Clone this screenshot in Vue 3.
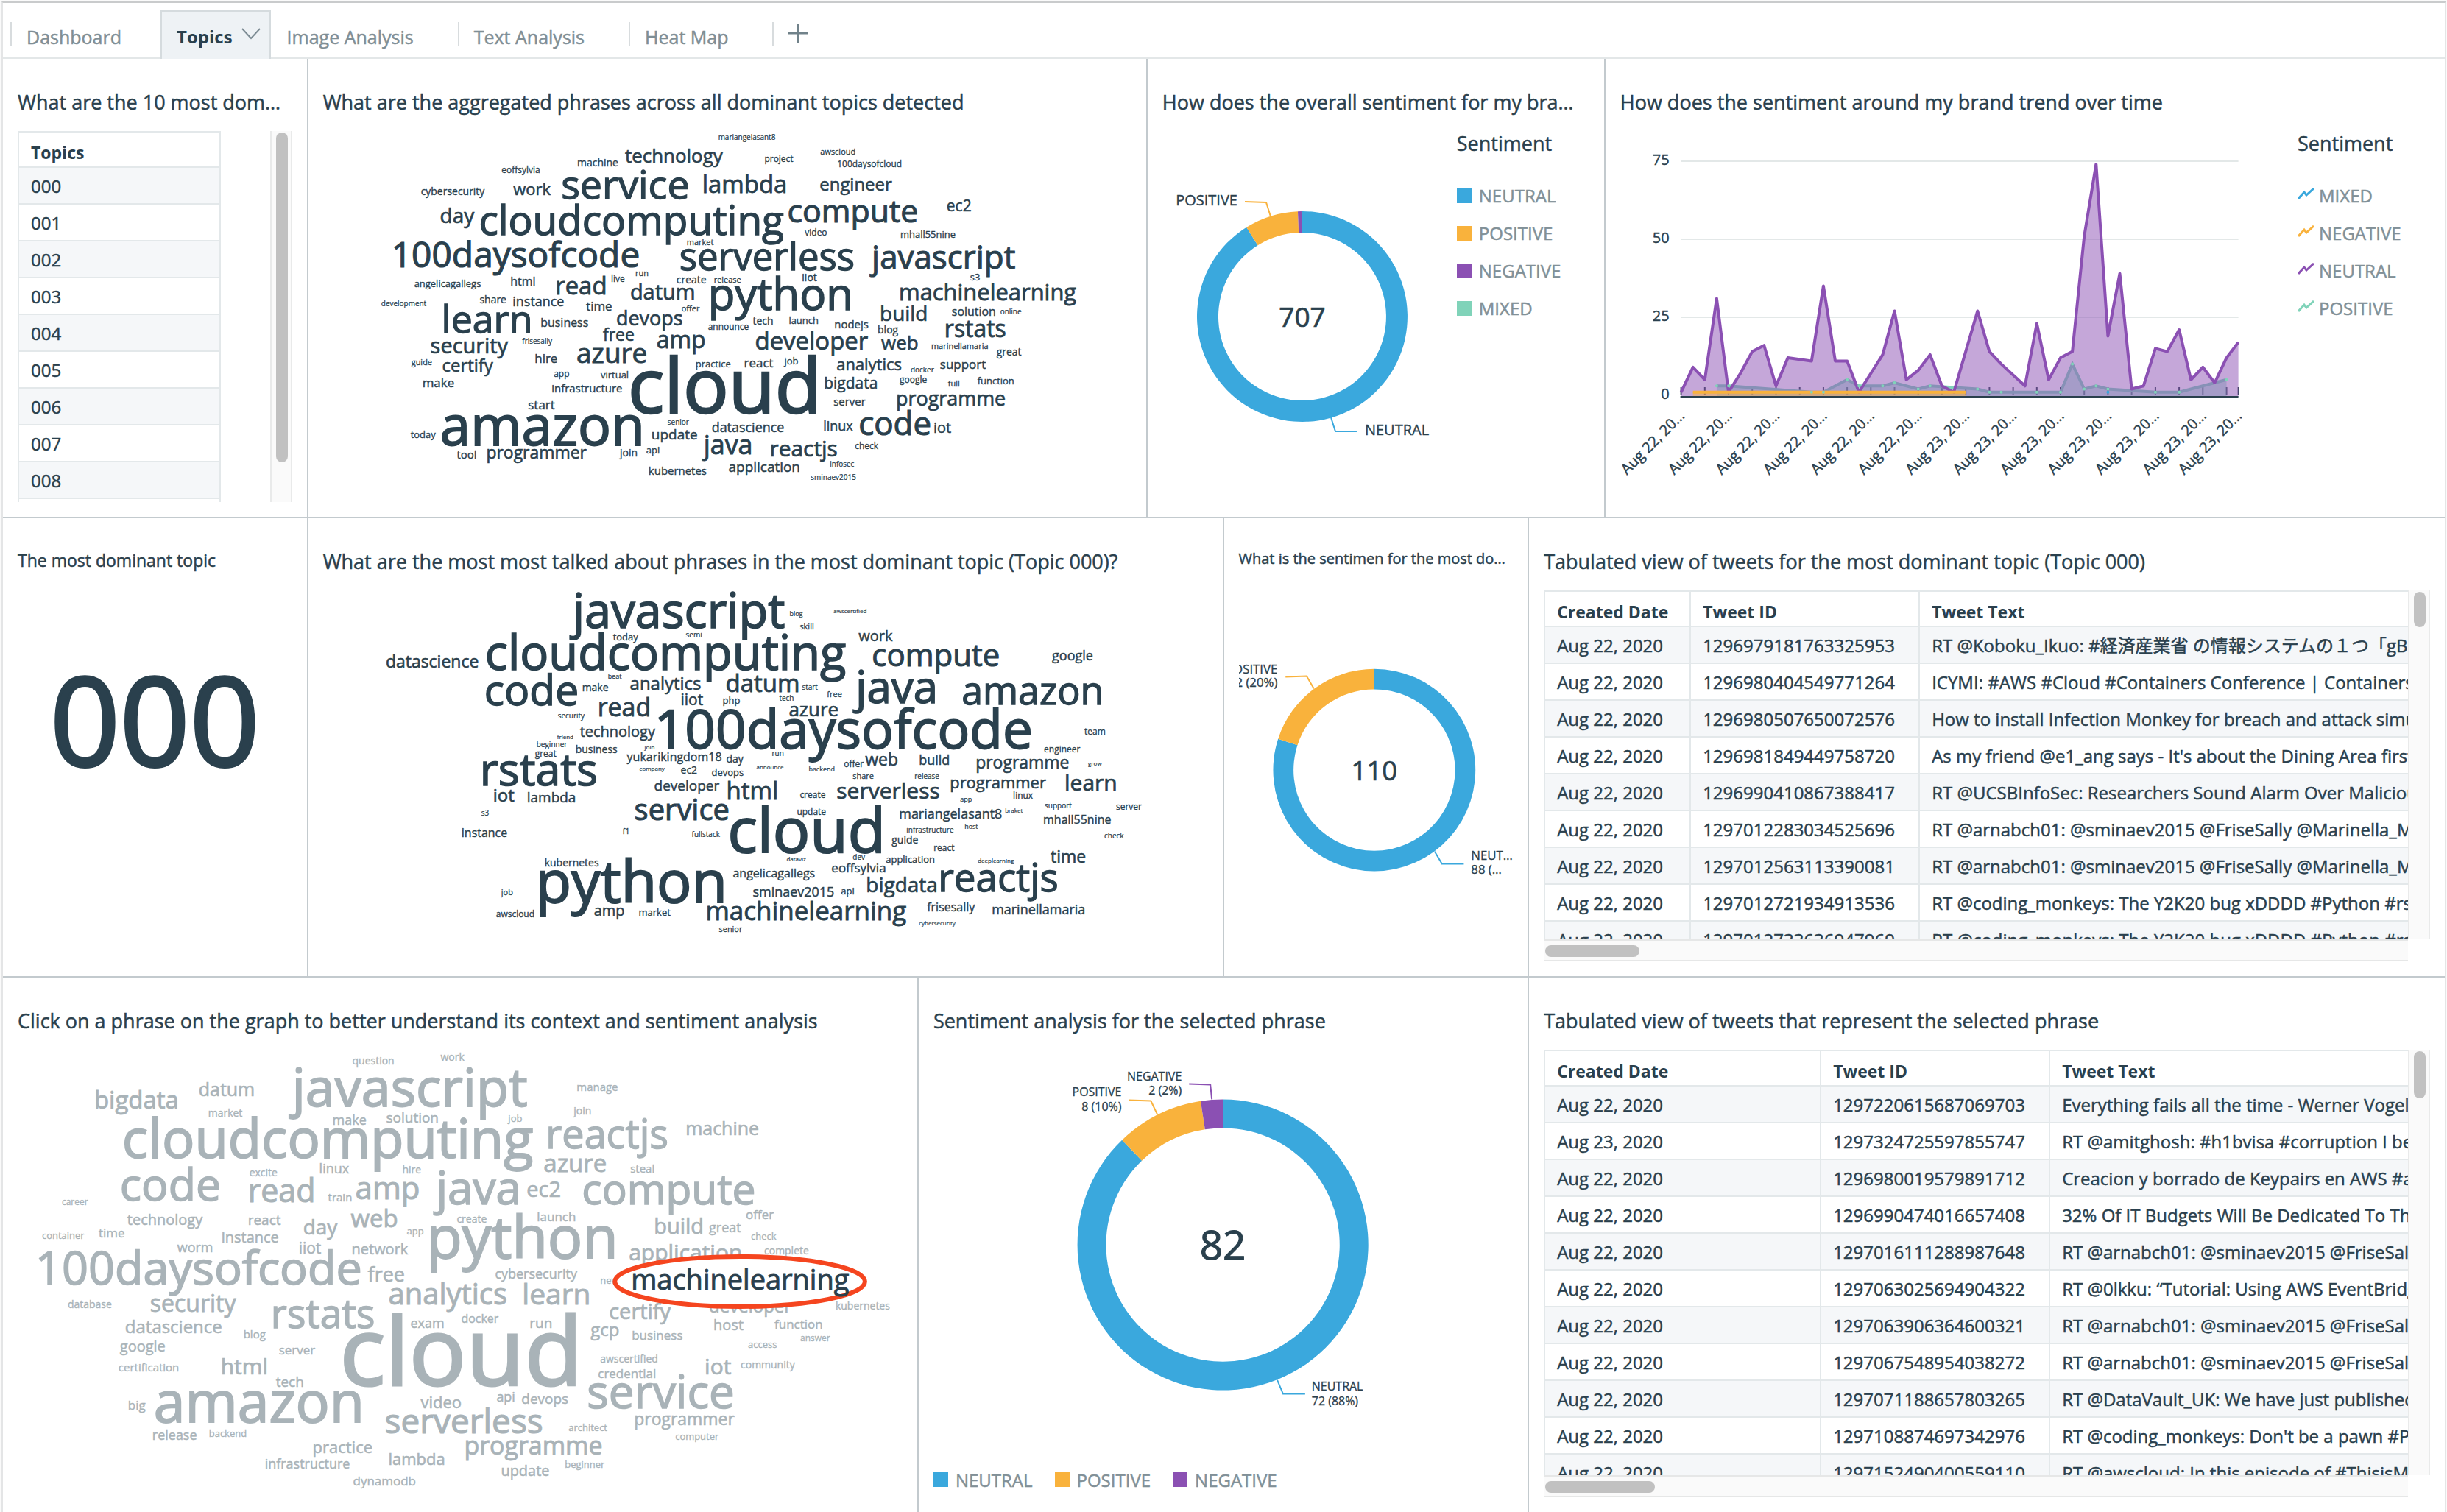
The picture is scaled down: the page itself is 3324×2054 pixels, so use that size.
<script setup>
const BLUE = '#3aa8dd'
const ORANGE = '#f9b23c'
const PURPLE = '#8b50b3'
const GREEN = '#80d3b9'

/* ---------- word clouds: [phrase, left, baseline, width] ---------- */
const pen = document.createElement('canvas').getContext('2d')
pen.font = '100px "Open Sans", "Noto Sans", sans-serif'

function layoutCloud(words) {
  return words.map(([text, left, y, width]) => {
    const m = pen.measureText(text)
    const ink = m.actualBoundingBoxLeft + m.actualBoundingBoxRight + 3
    const size = Math.round((width * 100) / ink)
    return { text, y, size, x: Math.round(left + ((m.actualBoundingBoxLeft + 1) * size) / 100) }
  })
}

const allTopics = layoutCloud([
  ['mariangelasant8', 477, 29, 80], ['technology', 349, 60, 134], ['machine', 285, 65, 56],
  ['eoffsylvia', 181, 75, 50], ['cybersecurity', 72, 105, 89], ['work', 197, 105, 51],
  ['service', 264, 110, 171], ['lambda', 456, 102, 112], ['day', 98, 143, 46],
  ['cloudcomputing', 152, 159, 410], ['100daysofcode', 35, 203, 331], ['market', 434, 173, 37],
  ['serverless', 425, 207, 238], ['run', 364, 215, 17], ['live', 331, 223, 17],
  ['create', 420, 225, 41], ['release', 471, 224, 37], ['angelicagallegs', 62, 230, 88],
  ['html', 194, 228, 33], ['read', 256, 240, 67], ['datum', 357, 247, 85],
  ['python', 466, 261, 190], ['development', 17, 256, 63], ['share', 152, 252, 36],
  ['instance', 197, 256, 67], ['time', 296, 262, 36], ['learn', 103, 292, 118],
  ['business', 235, 284, 64], ['devops', 338, 282, 88], ['offer', 426, 263, 25],
  ['announce', 462, 288, 56], ['free', 319, 303, 42], ['amp', 393, 313, 66],
  ['security', 85, 320, 104], ['frisesally', 209, 307, 42], ['azure', 284, 333, 94],
  ['hire', 227, 333, 29], ['guide', 58, 336, 29], ['certify', 101, 345, 68],
  ['practice', 446, 339, 48], ['app', 252, 352, 21], ['virtual', 316, 354, 37],
  ['make', 74, 366, 43], ['infrastructure', 250, 373, 98], ['cloud', 357, 401, 253],
  ['start', 218, 396, 36], ['senior', 407, 417, 29], ['amazon', 99, 445, 273],
  ['today', 57, 435, 35], ['tool', 120, 464, 27], ['programmer', 162, 464, 137],
  ['update', 386, 437, 60], ['datascience', 468, 427, 100], ['join', 341, 460, 25],
  ['api', 378, 456, 18], ['java', 453, 457, 67], ['kubernetes', 382, 486, 80],
  ['application', 491, 482, 95], ['react', 512, 339, 38], ['awscloud', 615, 49, 49],
  ['project', 540, 59, 37], ['100daysofcloud', 639, 66, 83], ['engineer', 615, 99, 97],
  ['compute', 572, 142, 175], ['ec2', 788, 127, 32], ['video', 594, 160, 29],
  ['mhall55nine', 725, 163, 72], ['javascript', 682, 205, 197], ['s3', 820, 221, 13],
  ['iiot', 591, 222, 20], ['machinelearning', 724, 248, 238], ['build', 698, 276, 62],
  ['solution', 795, 269, 58], ['online', 860, 267, 29], ['tech', 523, 281, 27],
  ['launch', 573, 280, 38], ['nodejs', 635, 286, 46], ['blog', 694, 293, 27],
  ['rstats', 786, 298, 81], ['developer', 527, 315, 152], ['web', 698, 315, 49],
  ['marinellamaria', 767, 314, 79], ['great', 855, 323, 33], ['job', 565, 335, 20],
  ['analytics', 638, 343, 88], ['docker', 738, 346, 32], ['support', 779, 341, 63],
  ['bigdata', 621, 368, 72], ['google', 723, 360, 36], ['full', 789, 365, 16],
  ['function', 829, 362, 48], ['server', 634, 391, 44], ['programme', 720, 391, 145],
  ['linux', 620, 425, 39], ['code', 669, 431, 95], ['iot', 770, 428, 23],
  ['check', 662, 450, 32], ['reactjs', 548, 460, 89], ['infosec', 629, 475, 34],
  ['sminaev2015', 602, 493, 64],
])

const dominantTopic = layoutCloud([
  ['javascript', 272, 73, 292], ['datascience', 24, 127, 126], ['cloudcomputing', 161, 130, 492],
  ['today', 332, 90, 34], ['semi', 431, 86, 22], ['code', 159, 178, 124],
  ['beat', 326, 142, 18], ['make', 291, 159, 35], ['analytics', 356, 157, 96],
  ['datum', 486, 160, 97], ['read', 313, 193, 68], ['iiot', 425, 178, 30],
  ['php', 482, 176, 23], ['security', 257, 196, 36], ['100daysofcode', 394, 237, 510],
  ['technology', 287, 221, 101], ['friend', 256, 224, 23], ['beginner', 229, 235, 41],
  ['great', 226, 248, 28], ['business', 282, 243, 56], ['join', 374, 238, 14],
  ['yukarikingdom18', 351, 254, 130], ['day', 487, 256, 23], ['rstats', 155, 287, 155],
  ['company', 368, 267, 36], ['ec2', 425, 271, 22], ['devops', 467, 274, 42],
  ['announce', 527, 265, 38], ['iot', 170, 309, 28], ['lambda', 216, 310, 66],
  ['developer', 389, 294, 90], ['html', 488, 306, 66], ['service', 363, 334, 127],
  ['s3', 153, 328, 10], ['instance', 127, 357, 61], ['f1', 345, 353, 8],
  ['fullstack', 439, 357, 40], ['cloud', 491, 378, 207], ['kubernetes', 240, 397, 74],
  ['python', 233, 446, 252], ['angelicagallegs', 495, 412, 114], ['job', 179, 436, 17],
  ['sminaev2015', 523, 438, 110], ['awscloud', 173, 466, 50], ['amp', 307, 464, 40],
  ['market', 368, 464, 41], ['machinelearning', 460, 470, 271], ['senior', 476, 486, 33],
  ['blog', 573, 57, 17], ['awscertified', 632, 53, 47], ['skill', 586, 75, 19],
  ['work', 666, 91, 46], ['compute', 686, 125, 173], ['google', 929, 117, 56],
  ['java', 658, 175, 113], ['amazon', 808, 177, 188], ['start', 589, 157, 22],
  ['free', 623, 167, 21], ['tech', 558, 172, 20], ['azure', 572, 193, 67],
  ['team', 973, 218, 27], ['engineer', 918, 242, 51], ['run', 549, 247, 15],
  ['offer', 646, 262, 26], ['web', 675, 260, 45], ['build', 749, 259, 40],
  ['programme', 827, 264, 127], ['grow', 978, 260, 19], ['backend', 599, 268, 33],
  ['share', 658, 278, 29], ['release', 743, 278, 33], ['programmer', 792, 291, 128],
  ['learn', 948, 294, 67], ['create', 586, 304, 35], ['serverless', 637, 305, 141],
  ['linux', 877, 305, 26], ['app', 804, 309, 15], ['update', 583, 327, 38],
  ['mariangelasant8', 722, 332, 137], ['braket', 866, 324, 25], ['support', 919, 318, 37],
  ['server', 1016, 320, 34], ['mhall55nine', 918, 339, 93], ['infrastructure', 732, 351, 64],
  ['host', 811, 346, 17], ['check', 1000, 359, 26], ['guide', 711, 366, 36],
  ['react', 769, 376, 27], ['dataviz', 568, 390, 27], ['dev', 658, 388, 17],
  ['application', 703, 392, 65], ['deeplearning', 828, 392, 51], ['time', 927, 392, 48],
  ['eoffsylvia', 630, 405, 71], ['bigdata', 678, 432, 94], ['reactjs', 778, 431, 160],
  ['api', 642, 435, 17], ['frisesally', 759, 458, 65], ['marinellamaria', 848, 462, 124],
  ['cybersecurity', 748, 477, 52],
])

const explorer = layoutCloud([
  ['question', 480, 46, 56], ['work', 599, 41, 32], ['javascript', 392, 103, 324],
  ['bigdata', 130, 106, 112], ['datum', 271, 89, 74], ['market', 284, 117, 47],
  ['make', 453, 128, 45], ['solution', 526, 125, 68], ['cloudcomputing', 169, 173, 554],
  ['code', 165, 231, 133], ['excite', 340, 198, 37], ['linux', 435, 194, 40],
  ['hire', 548, 194, 25], ['read', 340, 233, 86], ['train', 446, 232, 31],
  ['amp', 484, 229, 86], ['java', 589, 236, 117], ['career', 84, 237, 36],
  ['technology', 173, 264, 101], ['react', 338, 264, 44], ['day', 413, 277, 46],
  ['web', 477, 267, 64], ['create', 622, 261, 40], ['container', 58, 283, 56],
  ['time', 134, 281, 35], ['instance', 302, 288, 75], ['app', 553, 277, 22],
  ['iiot', 407, 303, 29], ['network', 479, 304, 75], ['python', 586, 309, 250],
  ['worm', 241, 301, 48], ['100daysofcode', 53, 345, 435], ['free', 500, 341, 49],
  ['analytics', 529, 372, 158], ['database', 93, 377, 60], ['security', 205, 382, 117],
  ['rstats', 372, 404, 138], ['datascience', 171, 411, 132], ['blog', 332, 418, 29],
  ['google', 163, 436, 62], ['server', 380, 440, 48], ['exam', 559, 404, 44],
  ['docker', 628, 397, 52], ['certification', 162, 463, 79], ['html', 302, 467, 60],
  ['tech', 375, 484, 38], ['cloud', 467, 482, 317], ['big', 175, 515, 23],
  ['amazon', 211, 532, 279], ['release', 208, 556, 58], ['backend', 285, 552, 50],
  ['video', 572, 513, 55], ['serverless', 525, 547, 213], ['practice', 427, 574, 80],
  ['infrastructure', 361, 595, 115], ['lambda', 530, 590, 76], ['dynamodb', 481, 618, 84],
  ['programme', 633, 576, 183], ['manage', 785, 82, 53], ['join', 779, 114, 24],
  ['job', 690, 124, 20], ['reactjs', 746, 160, 162], ['machine', 934, 142, 96],
  ['azure', 740, 192, 84], ['steal', 858, 193, 31], ['ec2', 717, 226, 44],
  ['compute', 793, 236, 232], ['launch', 731, 259, 51], ['build', 891, 276, 65],
  ['great', 964, 274, 44], ['offer', 1015, 256, 37], ['check', 1022, 284, 34],
  ['application', 856, 312, 153], ['complete', 1040, 304, 61], ['cybersecurity', 674, 337, 112],
  ['news', 817, 344, 30], ['learn', 713, 372, 89], ['certify', 829, 392, 85],
  ['developer', 965, 383, 110], ['kubernetes', 1137, 379, 73], ['run', 721, 404, 28],
  ['gcp', 803, 415, 38], ['business', 860, 420, 66], ['host', 971, 407, 39],
  ['function', 1053, 405, 65], ['access', 1017, 431, 40], ['answer', 1088, 422, 42],
  ['awscertified', 816, 451, 80], ['credential', 814, 472, 77], ['iot', 960, 467, 35],
  ['community', 1008, 459, 75], ['service', 800, 513, 196], ['api', 676, 504, 24],
  ['devops', 710, 507, 64], ['architect', 773, 544, 53], ['programmer', 864, 536, 136],
  ['computer', 919, 556, 58], ['beginner', 769, 594, 53], ['update', 682, 605, 63],
])
const [selected] = layoutCloud([['machinelearning', 861, 352, 291]])

/* ---------- donuts ---------- */
function ring(cx, cy, outer, inner, slices) {
  const at = (r, deg) => {
    const a = (deg * Math.PI) / 180
    return `${(cx + r * Math.sin(a)).toFixed(2)} ${(cy - r * Math.cos(a)).toFixed(2)}`
  }
  let from = 0
  return slices.map(([to, color]) => {
    const big = to - from > 180 ? 1 : 0
    const d = `M${at(outer, from)}A${outer} ${outer} 0 ${big} 1 ${at(outer, to)}L${at(inner, to)}A${inner} ${inner} 0 ${big} 0 ${at(inner, from)}Z`
    from = to
    return { d, color }
  })
}
const overallRing = ring(190, 252, 143, 114, [[328, BLUE], [357.6, ORANGE], [359.6, PURPLE], [359.99, GREEN]])
const topicRing = ring(186, 244, 139, 111, [[288, BLUE], [359.99, ORANGE]])
const phraseRing = ring(394, 265, 198, 159, [[316.1, BLUE], [351.2, ORANGE], [359.99, PURPLE]])

const overallLegend = [
  ['NEUTRAL', BLUE], ['POSITIVE', ORANGE], ['NEGATIVE', PURPLE], ['MIXED', GREEN],
]
const trendLegend = [
  ['MIXED', BLUE], ['NEGATIVE', ORANGE], ['NEUTRAL', PURPLE], ['POSITIVE', GREEN],
]
const phraseLegend = overallLegend.slice(0, 3)

/* ---------- sentiment trend ---------- */
const X0 = 82
const X1 = 839
const Y0 = 359
const px = (i) => +(X0 + (i * (X1 - X0)) / 47).toFixed(1)
const py = (v) => +(Y0 - v * 4.24).toFixed(1)
const neutral = [1, 9, 5, 31, 1, 7, 14, 16, 3, 12, 11.5, 11, 35, 11, 11, 1, 7, 13, 27, 5, 8, 13, 3, 1, 14, 27, 14, 10,
  6.5, 3, 23, 5, 12, 14, 51, 74, 19, 39, 2, 3, 15, 14, 21, 5, 9, 4, 12, 17].map((v, i) => [i, v])
const positive = [[3, 3], [4, 3], [11, 1], [12, 1], [14, 5], [15, 3], [17, 3], [18, 4], [20, 2], [21, 3], [25, 2],
  [26, 1], [27, 1], [30, 1], [32, 1], [33, 10], [34, 2], [35, 3], [36, 2], [40, 1], [42, 1], [46, 5]]
const negative = [[1, 1], [24, 1]]
const line = (pts) => pts.map(([i, v]) => `${px(i)},${py(v)}`).join(' ')
const area = (pts) => `${px(pts[0][0])},${Y0 + 2} ${line(pts)} ${px(pts[pts.length - 1][0])},${Y0 + 2}`
const grid = [75, 50, 25, 0]
const ticks = [...Array.from({ length: 24 }, (_, k) => k * 2), 47]
const dates = [0, 4, 8, 12, 16, 20, 24, 28, 32, 36, 40, 44, 47].map((i, k) => ({
  x: px(i) + 6,
  text: k < 6 ? 'Aug 22, 20…' : 'Aug 23, 20…',
}))

/* ---------- tables ---------- */
const topics = ['000', '001', '002', '003', '004', '005', '006', '007', '008', '009']
const topicTweets = [
  ['Aug 22, 2020', '1296979181763325953', 'RT @Koboku_Ikuo: #経済産業省 の情報システムの１つ「gBizINFO'],
  ['Aug 22, 2020', '1296980404549771264', 'ICYMI: #AWS #Cloud #Containers Conference | Containers -'],
  ['Aug 22, 2020', '1296980507650072576', 'How to install Infection Monkey for breach and attack simulation'],
  ['Aug 22, 2020', '1296981849449758720', "As my friend @e1_ang says - It's about the Dining Area first"],
  ['Aug 22, 2020', '1296990410867388417', 'RT @UCSBInfoSec: Researchers Sound Alarm Over Malicious'],
  ['Aug 22, 2020', '1297012283034525696', 'RT @arnabch01: @sminaev2015 @FriseSally @Marinella_Maria'],
  ['Aug 22, 2020', '1297012563113390081', 'RT @arnabch01: @sminaev2015 @FriseSally @Marinella_Maria'],
  ['Aug 22, 2020', '1297012721934913536', 'RT @coding_monkeys: The Y2K20 bug xDDDD #Python #rstats'],
  ['Aug 22, 2020', '1297012733636947969', 'RT @coding_monkeys: The Y2K20 bug xDDDD #Python #rstats'],
]
const phraseTweets = [
  ['Aug 22, 2020', '1297220615687069703', 'Everything fails all the time - Werner Vogels'],
  ['Aug 23, 2020', '1297324725597855747', 'RT @amitghosh: #h1bvisa #corruption I believe'],
  ['Aug 22, 2020', '1296980019579891712', 'Creacion y borrado de Keypairs en AWS #aws'],
  ['Aug 22, 2020', '1296990474016657408', '32% Of IT Budgets Will Be Dedicated To The'],
  ['Aug 22, 2020', '1297016111288987648', 'RT @arnabch01: @sminaev2015 @FriseSally'],
  ['Aug 22, 2020', '1297063025694904322', 'RT @0lkku: “Tutorial: Using AWS EventBridge'],
  ['Aug 22, 2020', '1297063906364600321', 'RT @arnabch01: @sminaev2015 @FriseSally'],
  ['Aug 22, 2020', '1297067548954038272', 'RT @arnabch01: @sminaev2015 @FriseSally'],
  ['Aug 22, 2020', '1297071188657803265', 'RT @DataVault_UK: We have just published'],
  ['Aug 22, 2020', '1297108874697342976', "RT @coding_monkeys: Don't be a pawn #Python"],
  ['Aug 22, 2020', '1297152490400559110', 'RT @awscloud: In this episode of #ThisisMyArchitecture'],
]
</script>

<template>
  <div class="page">
    <nav class="tabs">
      <button class="tab first" type="button"><span>Dashboard</span></button>
      <button class="tab active" type="button">
        <span>Topics</span>
        <svg width="26" height="16" viewBox="0 0 26 16"><path d="M1 1L13 14L25 1" fill="none" stroke="#7d8c94" stroke-width="2" /></svg>
      </button>
      <button class="tab plain" type="button"><span>Image Analysis</span></button>
      <button class="tab" type="button"><span>Text Analysis</span></button>
      <button class="tab" type="button"><span>Heat Map</span></button>
      <button class="tab add" type="button" aria-label="Add sheet">
        <span><svg width="26" height="26" viewBox="0 0 26 26"><path d="M0 13H26M13 0V26" fill="none" stroke="#71828a" stroke-width="3" /></svg></span>
      </button>
    </nav>

    <main>
      <div class="row row-top">
        <section class="panel">
          <h2>What are the 10 most dom…</h2>
          <div class="scroller topic-list">
            <div class="clip">
              <table class="narrow">
                <thead><tr><th>Topics</th></tr></thead>
                <tbody><tr v-for="t in topics" :key="t"><td>{{ t }}</td></tr></tbody>
              </table>
            </div>
            <div class="bar-v"><i class="thumb-long"></i></div>
          </div>
        </section>

        <section class="panel">
          <h2>What are the aggregated phrases across all dominant topics detected</h2>
          <svg class="chart" viewBox="-62 18 1101 504">
            <g class="cloud">
              <text v-for="w in allTopics" :key="w.text" :x="w.x" :y="w.y" :font-size="w.size">{{ w.text }}</text>
            </g>
          </svg>
        </section>

        <section class="panel">
          <h2>How does the overall sentiment for my bra…</h2>
          <div class="with-legend">
            <svg class="chart" viewBox="0 0 380 504">
              <path v-for="s in overallRing" :key="s.color" :d="s.d" :fill="s.color" />
              <path d="M112 96L141 97L147 116" class="lead" :stroke="ORANGE" />
              <path d="M229 389L235 408H264" class="lead" :stroke="BLUE" />
              <text x="190" y="266" class="total">707</text>
              <text x="102" y="101" class="label end">POSITIVE</text>
              <text x="275" y="413" class="label">NEUTRAL</text>
            </svg>
            <div class="legend">
              <h3>Sentiment</h3>
              <ul>
                <li v-for="[name, color] in overallLegend" :key="name"><i :style="{ background: color }"></i>{{ name }}</li>
              </ul>
            </div>
          </div>
        </section>

        <section class="panel">
          <h2>How does the sentiment around my brand trend over time</h2>
          <div class="with-legend">
            <svg class="chart" viewBox="0 0 899 504">
              <path v-for="g in grid.slice(0, 3)" :key="g" :d="`M${X0} ${py(g)}H${X1}`" stroke="#e3e8e8" stroke-width="2" />
              <text v-for="g in grid" :key="g" x="66" :y="Math.round(py(g)) + 5" class="label end">{{ g }}</text>
              <path v-for="t in ticks" :key="t" :d="`M${px(t)} 348V359`" stroke="#2a404d" stroke-width="2" />
              <polygon :points="area(positive)" :fill="GREEN" fill-opacity="0.5" />
              <polyline :points="line(positive)" fill="none" :stroke="GREEN" stroke-width="4" />
              <polygon :points="area(neutral)" :fill="PURPLE" fill-opacity="0.5" />
              <polygon :points="area(negative)" :fill="ORANGE" fill-opacity="0.5" />
              <polyline :points="line(neutral)" fill="none" :stroke="PURPLE" stroke-width="4" stroke-linejoin="round" />
              <polyline :points="line(negative)" fill="none" :stroke="ORANGE" stroke-width="4" />
              <circle v-for="[i, v] in positive" :key="i" :cx="px(i)" :cy="py(v)" r="2" :fill="GREEN" />
              <circle :cx="px(36)" :cy="py(1)" r="2" :fill="BLUE" />
              <path :d="`M${X0 - 1} 361H${X1}`" stroke="#2a404d" stroke-width="2" />
              <text v-for="d in dates" :key="d.x" class="label end" :transform="`translate(${d.x} 388) rotate(-45)`">{{ d.text }}</text>
            </svg>
            <div class="legend">
              <h3>Sentiment</h3>
              <ul class="lines">
                <li v-for="[name, color] in trendLegend" :key="name">
                  <svg width="24" height="16" viewBox="0 0 24 16"><path d="M1 15L9 6L12 10L22 1" fill="none" :stroke="color" stroke-width="3" /></svg>{{ name }}
                </li>
              </ul>
            </div>
          </div>
        </section>
      </div>

      <div class="row row-middle">
        <section class="panel">
          <h2 class="medium">The most dominant topic</h2>
          <div class="kpi">000</div>
        </section>

        <section class="panel">
          <h2>What are the most most talked about phrases in the most dominant topic (Topic 000)?</h2>
          <svg class="chart" viewBox="-62 22 1203 504">
            <g class="cloud">
              <text v-for="w in dominantTopic" :key="w.text" :x="w.x" :y="w.y" :font-size="w.size">{{ w.text }}</text>
            </g>
          </svg>
        </section>

        <section class="panel">
          <h2 class="small">What is the sentimen for the most do…</h2>
          <svg class="chart cut" viewBox="0 0 377 504">
            <path v-for="s in topicRing" :key="s.color" :d="s.d" :fill="s.color" />
            <path d="M64 116L93 115L103 132" class="lead" :stroke="ORANGE" />
            <path d="M269 356L279 373H309" class="lead" :stroke="BLUE" />
            <text x="186" y="258" class="total">110</text>
            <text x="53" y="111" class="note end">POSITIVE</text>
            <text x="53" y="130" class="note end">22 (20%)</text>
            <text x="319" y="367" class="note">NEUT…</text>
            <text x="319" y="387" class="note">88 (…</text>
          </svg>
        </section>

        <section class="panel last">
          <h2>Tabulated view of tweets for the most dominant topic (Topic 000)</h2>
          <div class="scroller">
            <div class="clip">
              <table class="wide">
                <colgroup><col class="c-date" /><col class="c-id" /><col /></colgroup>
                <thead><tr><th>Created Date</th><th>Tweet ID</th><th>Tweet Text</th></tr></thead>
                <tbody>
                  <tr v-for="r in topicTweets" :key="r[1]"><td v-for="c in r" :key="c">{{ c }}</td></tr>
                </tbody>
              </table>
            </div>
            <div class="bar-v"><i class="thumb-a"></i></div>
            <div class="bar-h"><i class="thumb-b"></i></div>
          </div>
        </section>
      </div>

      <div class="row row-bottom">
        <section class="panel">
          <h2>Click on a phrase on the graph to better understand its context and sentiment analysis</h2>
          <svg class="chart" viewBox="24 26 1203 608">
            <g class="cloud faded">
              <text v-for="w in explorer" :key="w.text" :x="w.x" :y="w.y" :font-size="w.size">{{ w.text }}</text>
            </g>
            <ellipse cx="1006" cy="341" rx="170" ry="34" fill="#fff" stroke="#f5451f" stroke-width="6" />
            <g class="cloud"><text :x="selected.x" :y="selected.y" :font-size="selected.size">{{ selected.text }}</text></g>
          </svg>
        </section>

        <section class="panel">
          <h2>Sentiment analysis for the selected phrase</h2>
          <svg class="chart" viewBox="0 0 789 560">
            <path v-for="s in phraseRing" :key="s.color" :d="s.d" :fill="s.color" />
            <path d="M348 46L377 47L379 67" class="lead" :stroke="PURPLE" />
            <path d="M266 68L296 69L305 88" class="lead" :stroke="ORANGE" />
            <path d="M468 449L476 468H506" class="lead" :stroke="BLUE" />
            <text x="394" y="285" class="total big">82</text>
            <text x="338" y="41" class="note end">NEGATIVE</text>
            <text x="338" y="61" class="note end">2 (2%)</text>
            <text x="256" y="63" class="note end">POSITIVE</text>
            <text x="256" y="83" class="note end">8 (10%)</text>
            <text x="515" y="463" class="note">NEUTRAL</text>
            <text x="515" y="483" class="note">72 (88%)</text>
          </svg>
          <ul class="legend-row">
            <li v-for="[name, color] in phraseLegend" :key="name"><i :style="{ background: color }"></i>{{ name }}</li>
          </ul>
        </section>

        <section class="panel last">
          <h2>Tabulated view of tweets that represent the selected phrase</h2>
          <div class="scroller tall">
            <div class="clip">
              <table class="wide phrase">
                <colgroup><col class="c-date" /><col class="c-id" /><col /></colgroup>
                <thead><tr><th>Created Date</th><th>Tweet ID</th><th>Tweet Text</th></tr></thead>
                <tbody>
                  <tr v-for="r in phraseTweets" :key="r[1]"><td v-for="c in r" :key="c">{{ c }}</td></tr>
                </tbody>
              </table>
            </div>
            <div class="bar-v"><i class="thumb-c"></i></div>
            <div class="bar-h"><i class="thumb-d"></i></div>
          </div>
        </section>
      </div>
    </main>
  </div>
</template>

<style>
body {
  background: #fafafa;
}
</style>

<style scoped>
.page {
  margin: 2px 1px 0 2px;
  border: 2px solid #e4e5e6;
  border-top-color: #c9cbcc;
  border-bottom: 0;
  background: #fff;
  color: #2a404d;
  font-family: "Open Sans", "Noto Sans", "Noto Sans CJK JP", sans-serif;
  font-size: 24px;
  -webkit-text-stroke: 0.02em currentColor;
}
* {
  box-sizing: border-box;
}
h2,
h3,
ul {
  margin: 0;
  padding: 0;
  list-style: none;
  font-weight: 400;
}

/* tabs */
.tabs {
  display: flex;
  align-items: flex-end;
  height: 76px;
  padding-left: 10px;
  border-bottom: 2px solid #e3e7e8;
}
.tab {
  height: 48px;
  padding: 0;
  border: 0;
  background: none;
  color: #7f8e95;
  font: inherit;
  font-size: 25px;
  text-align: left;
  display: flex;
  align-items: flex-start;
}
.tab span {
  display: block;
  height: 32px;
  line-height: 40px;
  padding: 0 60px 0 20px;
  border-left: 2px solid #d8dcde;
}
.tab.first span {
  padding-right: 53px;
}
.tab.plain span {
  border-color: transparent;
}
.tab.active {
  height: 66px;
  margin-bottom: -2px;
  padding: 14px 12px 0 20px;
  border: 2px solid #d5dbde;
  border-bottom: 0;
  background: #eef2f5;
  color: #2a404d;
  font-size: 24px;
  font-weight: 700;
  -webkit-text-stroke: 0;
}
.tab.active span {
  padding: 0;
  border: 0;
}
.tab.active svg {
  margin: 8px 0 0 12px;
}
.tab.add span {
  padding: 2px 20px;
}
.tab.add svg {
  display: block;
}

/* panels */
.row {
  display: grid;
  border-bottom: 2px solid #c3cace;
}
.row-top {
  grid-template-columns: minmax(0, 4fr) minmax(0, 11fr) minmax(0, 6fr) minmax(0, 11fr);
}
.row-middle {
  grid-template-columns: minmax(0, 4fr) minmax(0, 12fr) minmax(0, 4fr) minmax(0, 12fr);
}
.row-bottom {
  grid-template-columns: minmax(0, 12fr) minmax(0, 8fr) minmax(0, 12fr);
  border-bottom: 0;
}
.panel {
  padding: 0 20px 20px;
  border-right: 2px solid #c3cace;
}
.panel:last-child {
  border-right: 0;
}
h2 {
  height: 98px;
  padding-top: 39px;
  font-size: 27px;
  line-height: 40px;
  white-space: nowrap;
}
h2.medium {
  font-size: 23px;
  line-height: 36px;
}
h2.small {
  font-size: 20px;
  line-height: 32px;
}
.chart {
  display: block;
  width: 100%;
  height: 504px;
  overflow: visible;
}
.row-bottom .chart {
  height: 608px;
}
.row-bottom .panel:nth-child(2) .chart {
  height: 560px;
}
.chart.cut {
  overflow: hidden;
}
.kpi {
  height: 504px;
  font-size: 166px;
  line-height: 348px;
  text-align: center;
  -webkit-text-stroke: 0.025em currentColor;
}

/* charts */
svg text {
  fill: #2a404d;
  stroke: #2a404d;
  stroke-width: 0.02em;
}
.cloud text {
  stroke-width: 0.025em;
}
.faded text {
  fill: #a9b3b8;
  stroke: #a9b3b8;
}
.lead {
  fill: none;
  stroke-width: 2;
}
.label {
  font-size: 20px;
}
.note {
  font-size: 16px;
}
.cut .note {
  font-size: 17px;
}
.end {
  text-anchor: end;
}
.total {
  font-size: 37px;
  text-anchor: middle;
}
.total.big {
  font-size: 55px;
}
.with-legend {
  display: flex;
  gap: 20px;
}
.with-legend > .chart {
  flex: 1;
  min-width: 0;
}
.legend {
  width: 180px;
}
.legend h3 {
  margin-bottom: 28px;
  font-size: 27px;
  line-height: 34px;
}
.legend li,
.legend-row li {
  display: flex;
  align-items: center;
  height: 51px;
  color: #819097;
}
.legend i,
.legend-row i {
  width: 20px;
  height: 20px;
  margin-right: 10px;
}
.legend li svg {
  margin: 0 5px 6px 0;
}
.legend-row {
  display: flex;
  gap: 30px;
}
.legend-row li {
  height: 48px;
}

/* tables */
.scroller {
  display: grid;
  grid-template-columns: minmax(0, 1fr) 30px;
  grid-template-rows: 474px 30px;
}
.scroller.tall {
  grid-template-rows: 578px 30px;
}
.scroller.topic-list {
  grid-template-rows: 504px;
}
.clip {
  overflow: hidden;
}
table {
  border-collapse: separate;
  border-spacing: 0;
  table-layout: fixed;
  width: 100%;
  border-left: 2px solid #e3e8ea;
}
table.narrow {
  width: 276px;
}
th,
td {
  height: 50px;
  padding: 2px 0 0 16px;
  border-right: 2px solid #e3e8ea;
  border-bottom: 2px solid #e3e8ea;
  line-height: 40px;
  text-align: left;
  white-space: nowrap;
  overflow: hidden;
}
th {
  padding-top: 8px;
  border-top: 2px solid #e3e8ea;
  font-size: 23px;
  line-height: 38px;
  font-weight: 700;
  -webkit-text-stroke: 0;
}
.wide tr > :last-child {
  border-right: 0;
}
tbody tr:nth-child(odd) {
  background: #f5f7f9;
}
.c-date {
  width: 198px;
}
.c-id {
  width: 311px;
}
.phrase .c-date {
  width: 375px;
}
.bar-v {
  padding: 2px 6px;
  border: solid #e9eaea;
  border-width: 0 2px;
  background: #fafafa;
}
.bar-h {
  padding: 6px 2px;
  border: solid #e6e7e7;
  border-width: 2px 0;
  background: #fafafa;
}
.scroller i {
  display: block;
  width: 16px;
  height: 16px;
  border-radius: 8px;
  background: #c1c1c1;
}
.scroller .thumb-long {
  height: 448px;
}
.scroller .thumb-a {
  height: 48px;
}
.scroller .thumb-b {
  width: 128px;
}
.scroller .thumb-c {
  height: 64px;
}
.scroller .thumb-d {
  width: 149px;
}
</style>
